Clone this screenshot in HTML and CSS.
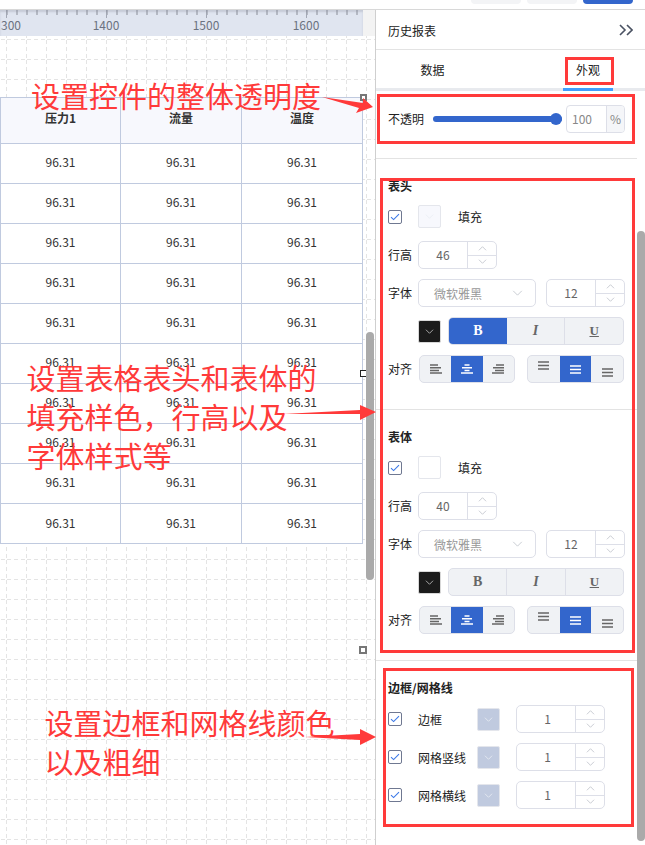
FILE: index.html
```html
<!DOCTYPE html>
<html lang="zh-CN">
<head>
  <meta charset="UTF-8" />
  <title>历史报表 - 外观设置</title>
  <link rel="stylesheet" href="styles.css">
</head>
<body>
  <svg class="defs">
    <symbol id="chev-down" viewBox="0 0 12 7"><path d="M1 1l5 5 5-5" fill="none" stroke="currentColor" stroke-width="1"/></symbol>
    <symbol id="chev-up" viewBox="0 0 12 7"><path d="M1 6l5-5 5 5" fill="none" stroke="currentColor" stroke-width="1"/></symbol>
    <symbol id="check" viewBox="0 0 10 8"><path d="M1 4.2l2.6 2.4L9 1.2" fill="none" stroke="currentColor" stroke-width="1.1"/></symbol>
    <symbol id="al-left" viewBox="0 0 12 10"><path d="M0 1h8M0 3.7h11M0 6.4h9M0 9h12" stroke="currentColor" stroke-width="1.5"/></symbol>
    <symbol id="al-center" viewBox="0 0 12 10"><path d="M3.5 1h5M1 3.7h10M3.5 6.4h5M0 9h12" stroke="currentColor" stroke-width="1.5"/></symbol>
    <symbol id="al-right" viewBox="0 0 12 10"><path d="M4 1h8M1 3.7h11M3 6.4h9M0 9h12" stroke="currentColor" stroke-width="1.5"/></symbol>
    <symbol id="lines" viewBox="0 0 11 9"><path d="M0 1h11M0 4.5h11M0 8h11" stroke="currentColor" stroke-width="1.6"/></symbol>
  </svg>

  <div class="topbar">
    <span class="top-btn"></span>
    <span class="top-btn"></span>
    <span class="top-btn top-btn-primary"></span>
  </div>

  <div class="workspace">
    <section class="canvas">
      <div class="ruler">
        <span class="ruler-num ruler-first">300</span>
        <span class="ruler-num">1400</span>
        <span class="ruler-num">1500</span>
        <span class="ruler-num">1600</span>
      </div>

      <table class="report">
        <thead>
          <tr><th>压力1</th><th>流量</th><th>温度</th></tr>
        </thead>
        <tbody>
          <tr><td>96.31</td><td>96.31</td><td>96.31</td></tr>
          <tr><td>96.31</td><td>96.31</td><td>96.31</td></tr>
          <tr><td>96.31</td><td>96.31</td><td>96.31</td></tr>
          <tr><td>96.31</td><td>96.31</td><td>96.31</td></tr>
          <tr><td>96.31</td><td>96.31</td><td>96.31</td></tr>
          <tr><td>96.31</td><td>96.31</td><td>96.31</td></tr>
          <tr><td>96.31</td><td>96.31</td><td>96.31</td></tr>
          <tr><td>96.31</td><td>96.31</td><td>96.31</td></tr>
          <tr><td>96.31</td><td>96.31</td><td>96.31</td></tr>
          <tr><td>96.31</td><td>96.31</td><td>96.31</td></tr>
        </tbody>
      </table>

      <i class="handle handle-top"></i>
      <i class="handle handle-mid"></i>
      <i class="handle handle-bottom"></i>
      <div class="canvas-scroll"></div>
    </section>

    <aside class="panel">
      <header class="panel-head">
        <span>历史报表</span>
        <svg class="collapse" viewBox="0 0 14 12"><path d="M1 1l5 5-5 5M8 1l5 5-5 5" fill="none" stroke="#4a5262" stroke-width="1.6"/></svg>
      </header>

      <nav class="tabs">
        <a class="tab">数据</a>
        <a class="tab tab-active">外观</a>
      </nav>

      <div class="opacity-row">
        <span class="label">不透明</span>
        <div class="slider"><i class="slider-dot"></i></div>
        <div class="percent"><span class="percent-val">100</span><span class="percent-unit">%</span></div>
      </div>

      <section class="group">
        <h4 class="group-title">表头</h4>
        <div class="row row-fill">
          <span class="checkbox"><svg><use href="#check"/></svg></span>
          <span class="swatch swatch-head"><svg><use href="#chev-down"/></svg></span>
          <span class="fill-label">填充</span>
        </div>
        <div class="row row-height">
          <span class="label">行高</span>
          <div class="spinner"><span class="spin-val">46</span><span class="spin-btns"><i><svg><use href="#chev-up"/></svg></i><i><svg><use href="#chev-down"/></svg></i></span></div>
        </div>
        <div class="row row-next">
          <span class="label">字体</span>
          <div class="select"><span>微软雅黑</span><svg><use href="#chev-down"/></svg></div>
          <div class="spinner spinner-size"><span class="spin-val">12</span><span class="spin-btns"><i><svg><use href="#chev-up"/></svg></i><i><svg><use href="#chev-down"/></svg></i></span></div>
        </div>
        <div class="row row-next row-style">
          <span class="swatch swatch-dark"><svg><use href="#chev-down"/></svg></span>
          <div class="btn-group style-group">
            <b class="seg seg-b seg-on">B</b>
            <em class="seg seg-i">I</em>
            <u class="seg seg-u">U</u>
          </div>
        </div>
        <div class="row row-next">
          <span class="label">对齐</span>
          <div class="btn-group align-group">
            <span class="seg"><svg class="al"><use href="#al-left"/></svg></span>
            <span class="seg seg-on"><svg class="al"><use href="#al-center"/></svg></span>
            <span class="seg"><svg class="al"><use href="#al-right"/></svg></span>
          </div>
          <div class="btn-group valign-group">
            <span class="seg seg-top"><svg class="ln"><use href="#lines"/></svg></span>
            <span class="seg seg-on"><svg class="ln"><use href="#lines"/></svg></span>
            <span class="seg seg-low"><svg class="ln"><use href="#lines"/></svg></span>
          </div>
        </div>
      </section>

      <section class="group">
        <h4 class="group-title">表体</h4>
        <div class="row row-fill">
          <span class="checkbox"><svg><use href="#check"/></svg></span>
          <span class="swatch"></span>
          <span class="fill-label">填充</span>
        </div>
        <div class="row row-height">
          <span class="label">行高</span>
          <div class="spinner"><span class="spin-val">40</span><span class="spin-btns"><i><svg><use href="#chev-up"/></svg></i><i><svg><use href="#chev-down"/></svg></i></span></div>
        </div>
        <div class="row row-next">
          <span class="label">字体</span>
          <div class="select"><span>微软雅黑</span><svg><use href="#chev-down"/></svg></div>
          <div class="spinner spinner-size"><span class="spin-val">12</span><span class="spin-btns"><i><svg><use href="#chev-up"/></svg></i><i><svg><use href="#chev-down"/></svg></i></span></div>
        </div>
        <div class="row row-next row-style">
          <span class="swatch swatch-dark"><svg><use href="#chev-down"/></svg></span>
          <div class="btn-group style-group">
            <b class="seg seg-b">B</b>
            <em class="seg seg-i">I</em>
            <u class="seg seg-u">U</u>
          </div>
        </div>
        <div class="row row-next">
          <span class="label">对齐</span>
          <div class="btn-group align-group">
            <span class="seg"><svg class="al"><use href="#al-left"/></svg></span>
            <span class="seg seg-on"><svg class="al"><use href="#al-center"/></svg></span>
            <span class="seg"><svg class="al"><use href="#al-right"/></svg></span>
          </div>
          <div class="btn-group valign-group">
            <span class="seg seg-top"><svg class="ln"><use href="#lines"/></svg></span>
            <span class="seg seg-on"><svg class="ln"><use href="#lines"/></svg></span>
            <span class="seg seg-low"><svg class="ln"><use href="#lines"/></svg></span>
          </div>
        </div>
      </section>

      <section class="group group-last">
        <h4 class="group-title">边框/网格线</h4>
        <div class="row row-line">
          <span class="checkbox"><svg><use href="#check"/></svg></span>
          <span class="line-label">边框</span>
          <span class="swatch swatch-line"><svg><use href="#chev-down"/></svg></span>
          <div class="spinner"><span class="spin-val">1</span><span class="spin-btns"><i><svg><use href="#chev-up"/></svg></i><i><svg><use href="#chev-down"/></svg></i></span></div>
        </div>
        <div class="row row-line">
          <span class="checkbox"><svg><use href="#check"/></svg></span>
          <span class="line-label">网格竖线</span>
          <span class="swatch swatch-line"><svg><use href="#chev-down"/></svg></span>
          <div class="spinner"><span class="spin-val">1</span><span class="spin-btns"><i><svg><use href="#chev-up"/></svg></i><i><svg><use href="#chev-down"/></svg></i></span></div>
        </div>
        <div class="row row-line">
          <span class="checkbox"><svg><use href="#check"/></svg></span>
          <span class="line-label">网格横线</span>
          <span class="swatch swatch-line"><svg><use href="#chev-down"/></svg></span>
          <div class="spinner"><span class="spin-val">1</span><span class="spin-btns"><i><svg><use href="#chev-up"/></svg></i><i><svg><use href="#chev-down"/></svg></i></span></div>
        </div>
      </section>

      <div class="panel-scroll"></div>
    </aside>
  </div>

  <!-- red notes drawn over the screenshot -->
  <div class="note note-1">设置控件的整体透明度</div>
  <div class="note note-2">设置表格表头和表体的<br>填充样色，行高以及<br>字体样式等</div>
  <div class="note note-3">设置边框和网格线颜色<br>以及粗细</div>
  <div class="mark mark-tab"></div>
  <div class="mark mark-opacity"></div>
  <div class="mark mark-table"></div>
  <div class="mark mark-border"></div>
  <svg class="arrows" viewBox="0 0 645 845">
    <polygon points="322,97 363,103 363,98 373,107 356,113 359,108"/>
    <polygon points="283,414 360,410 360,405 376,412 360,420 360,414"/>
    <polygon points="305,737 360,734 360,729 376,737 360,745 360,740"/>
  </svg>
</body>
</html>
```

FILE: styles.css
```css
:root {
  --blue: #3366cc;
  --ctl-border: #dddfe8;
  --divider: #e3e3e3;
  --seg-bg: #f0f2f5;
  --grid-line: #c0cadf;
  --red: #ff3a3a;
}
* {
  box-sizing: border-box;
}
html, body {
  margin: 0;
  height: 845px;
  overflow: hidden;
}
body {
  position: relative;
  display: flex;
  flex-direction: column;
  background: #fff;
  color: #222;
  font-family: "Noto Sans CJK SC", "Open Sans", sans-serif;
  font-size: 12px;
}
.defs {
  display: none;
}
.topbar {
  height: 9px;
  flex: none;
  display: flex;
  justify-content: flex-end;
  gap: 6px;
  padding-right: 12px;
}
.top-btn {
  width: 50px;
  height: 4px;
  background: #f3f4f6;
  border-radius: 0 0 5px 5px;
}
.top-btn-primary {
  background: var(--blue);
}
.workspace {
  flex: 1;
  display: flex;
  min-height: 0;
  border-top: 1px solid #d8d8d8;
}

/* canvas side */
.canvas {
  position: relative;
  width: 376px;
  flex: none;
  overflow: hidden;
  border-right: 1px solid #cfcfcf;
  background: #fff url("data:image/svg+xml,%3Csvg xmlns='http://www.w3.org/2000/svg' width='20' height='20'%3E%3Cpath d='M1 .5h4M8 .5h4M15 .5h4M.5 1v4M.5 8v4M.5 15v4' stroke='%23e4e4e4' fill='none'/%3E%3C/svg%3E") 6px 9px;
}
.ruler {
  width: 375px;
  height: 26px;
  display: flex;
  padding-left: 1px;
  overflow: hidden;
  border-right: 12px solid #f3f3f3;
  background-color: #e0e5f0;
  background-image:
    repeating-linear-gradient(90deg, #a3a8b5 0 1px, transparent 1px 100px),
    repeating-linear-gradient(90deg, #b5b9c4 0 2px, transparent 2px 10px);
  background-size: 100% 8px, 100% 5px;
  background-position: 6px 0, 6px 0;
  background-repeat: no-repeat;
  box-shadow: inset 0 2px 2px rgba(120, 125, 140, 0.25);
}
.ruler-num {
  width: 100px;
  padding-top: 6px;
  color: #6b7280;
  font-size: 12px;
  line-height: 17px;
  text-align: center;
}
.ruler-first {
  width: 55px;
  text-align: left;
}
.report {
  position: absolute;
  left: 0;
  top: 87px;
  width: 363px;
  table-layout: fixed;
  border-collapse: collapse;
  background: #fff;
}
.report th, .report td {
  border: 1px solid var(--grid-line);
  padding: 0;
  text-align: center;
  font-size: 12px;
  color: #333;
}
.report th:first-child {
  width: 120px;
}
.report th {
  height: 46px;
  padding-bottom: 7px;
  background: #f7f8fd;
  font-weight: 700;
}
.report td {
  height: 40px;
  padding-bottom: 4px;
}
.report tr:last-child td {
  padding-bottom: 2px;
}
.handle {
  position: absolute;
  background: #fff;
  width: 7px;
  height: 7px;
  border: 2px solid #777;
}
.handle-top { left: 360px; top: 84px; }
.handle-mid { left: 360px; top: 360px; border: 1px solid #222; }
.handle-bottom { left: 359px; top: 636px; width: 8px; height: 8px; }
.canvas-scroll {
  position: absolute;
  left: 366px;
  top: 322px;
  width: 8px;
  height: 248px;
  background: #aaa;
  border-radius: 4px;
}

/* property panel */
.panel {
  position: relative;
  flex: 1;
  min-width: 0;
  overflow: hidden;
}
.panel-head {
  height: 40px;
  display: flex;
  align-items: center;
  justify-content: space-between;
  padding: 2px 12px 0 12px;
  border-bottom: 1px solid var(--divider);
}
.collapse {
  width: 14px;
  height: 12px;
  margin-top: -2px;
}
.tabs {
  height: 41px;
  display: flex;
  border-bottom: 3px solid #e8eaee;
}
.tab {
  width: 113px;
  padding-top: 11px;
  text-align: center;
  line-height: 18px;
}
.tab-active {
  width: 50px;
  height: 41px;
  margin-left: 74px;
  border-bottom: 3px solid #409eff;
}
.opacity-row {
  height: 68px;
  width: 261px;
  display: flex;
  align-items: center;
  padding: 0 0 12px 12px;
  border-bottom: 1px solid var(--divider);
}
.label {
  flex: none;
  width: 30px;
  line-height: 16px;
  white-space: nowrap;
}
.opacity-row .label {
  width: 36px;
}
.slider {
  position: relative;
  flex: none;
  width: 129px;
  height: 6px;
  margin-left: 9px;
  border-radius: 3px;
  background: var(--blue);
}
.slider-dot {
  position: absolute;
  right: 0;
  top: -3px;
  width: 12px;
  height: 12px;
  border-radius: 50%;
  background: var(--blue);
}
.percent {
  display: flex;
  flex: none;
  width: 59px;
  height: 28px;
  margin-left: 4px;
  border: 1px solid var(--ctl-border);
  border-radius: 4px;
  overflow: hidden;
  line-height: 26px;
  color: #888;
}
.percent-val {
  flex: 1;
  padding-left: 5px;
}
.percent-unit {
  width: 18px;
  text-align: center;
  background: #f5f6f9;
  border-left: 1px solid var(--ctl-border);
}
.group {
  width: 261px;
  height: 251px;
  padding: 18px 12px 0;
  border-bottom: 1px solid var(--divider);
}
.group-last {
  height: auto;
  border-bottom: 0;
}
.group-title {
  margin: 0;
  height: 18px;
  font-size: 12px;
  line-height: 18px;
  font-weight: 700;
}
.row {
  display: flex;
  align-items: center;
}
.row-fill { height: 23px; margin-top: 10px; }
.row-height { height: 28px; margin-top: 13px; }
.row-next { height: 28px; margin-top: 10px; }
.row-style { padding-left: 30px; }
.row-line { height: 28px; margin-top: 10px; }
.group-title + .row-line { margin-top: 8px; }
.checkbox {
  flex: none;
  width: 14px;
  height: 14px;
  display: flex;
  align-items: center;
  justify-content: center;
  border: 1px solid #6f7891;
  border-radius: 2px;
  color: #3b78e7;
}
.checkbox svg {
  width: 10px;
  height: 8px;
}
.swatch {
  flex: none;
  width: 23px;
  height: 23px;
  display: flex;
  align-items: center;
  justify-content: center;
  border: 1px solid #e4e6ec;
  border-radius: 2px;
  color: #e9ebf2;
}
.swatch svg {
  width: 9px;
  height: 5px;
}
.row-fill .swatch {
  margin-left: 16px;
}
.swatch-head {
  background: #f7f8fd;
}
.swatch-dark {
  background: #1b1b1b;
  color: #ddd;
  border-color: #d8d8d8;
}
.swatch-line {
  background: #c0cadf;
  color: #f0f2f7;
}
.fill-label {
  margin-left: 17px;
}
.line-label {
  width: 59px;
  margin-left: 16px;
  white-space: nowrap;
}
.spinner {
  flex: none;
  display: flex;
  width: 79px;
  height: 28px;
  border: 1px solid var(--ctl-border);
  border-radius: 5px;
  overflow: hidden;
  color: #666;
}
.row-line .spinner {
  width: 89px;
  margin-left: 16px;
}
.row-line .spin-val {
  padding-left: 3px;
}
.spin-val {
  flex: 1;
  text-align: center;
  line-height: 26px;
}
.spin-btns {
  flex: none;
  width: 29px;
  display: flex;
  flex-direction: column;
  border-left: 1px solid var(--ctl-border);
}
.spin-btns i {
  flex: 1;
  display: flex;
  align-items: center;
  justify-content: center;
  color: #b4b8c2;
}
.spin-btns i + i {
  border-top: 1px solid var(--ctl-border);
}
.spin-btns svg {
  width: 9px;
  height: 5px;
}
.select {
  flex: none;
  display: flex;
  align-items: center;
  justify-content: space-between;
  width: 118px;
  height: 28px;
  padding: 0 12px 0 15px;
  border: 1px solid var(--ctl-border);
  border-radius: 5px;
  color: #999;
}
.select svg {
  width: 11px;
  height: 6px;
  color: #c0c4cc;
}
.spinner-size {
  margin-left: 10px;
}
.btn-group {
  display: flex;
  height: 28px;
  border: 1px solid var(--ctl-border);
  border-radius: 5px;
  overflow: hidden;
  background: var(--seg-bg);
}
.style-group {
  width: 176px;
  margin-left: 7px;
}
.seg {
  flex: 1;
  display: flex;
  align-items: center;
  justify-content: center;
  color: #666;
  border-left: 1px solid var(--ctl-border);
}
.seg:first-child {
  border-left: 0;
}
.seg-on {
  background: var(--blue);
  color: #fff;
  border-left: 0;
}
.seg-on + .seg {
  border-left: 0;
}
.seg-b, .seg-i, .seg-u {
  font-family: "Liberation Serif", serif;
  font-size: 14px;
  font-weight: 700;
}
.seg-u {
  font-size: 13px;
  text-decoration: underline;
}
.align-group {
  width: 96px;
  margin-left: 1px;
}
.valign-group {
  width: 97px;
  margin-left: 12px;
}
.al {
  width: 12px;
  height: 10px;
}
.ln {
  width: 11px;
  height: 9px;
}
.seg-top {
  padding-bottom: 7px;
}
.seg-low {
  padding-top: 7px;
}
.panel-scroll {
  position: absolute;
  right: 0;
  top: 221px;
  width: 8px;
  height: 610px;
  background: #aaa;
  border-radius: 4px;
}

/* annotations */
.note {
  position: absolute;
  color: var(--red);
  font-size: 29px;
  line-height: 39px;
  white-space: nowrap;
}
.note-1 { left: 31px; top: 76px; }
.note-2 { left: 26.5px; top: 358px; }
.note-3 { left: 44.5px; top: 703px; }
.mark {
  position: absolute;
  border: 3px solid var(--red);
}
.mark-tab { left: 565px; top: 57px; width: 49px; height: 28px; }
.mark-opacity { left: 377px; top: 94px; width: 258px; height: 50px; }
.mark-table { left: 380px; top: 178px; width: 255px; height: 475px; }
.mark-border { left: 383px; top: 668px; width: 251px; height: 159px; }
.arrows {
  position: absolute;
  left: 0;
  top: 0;
  width: 645px;
  height: 845px;
  fill: var(--red);
}
```
